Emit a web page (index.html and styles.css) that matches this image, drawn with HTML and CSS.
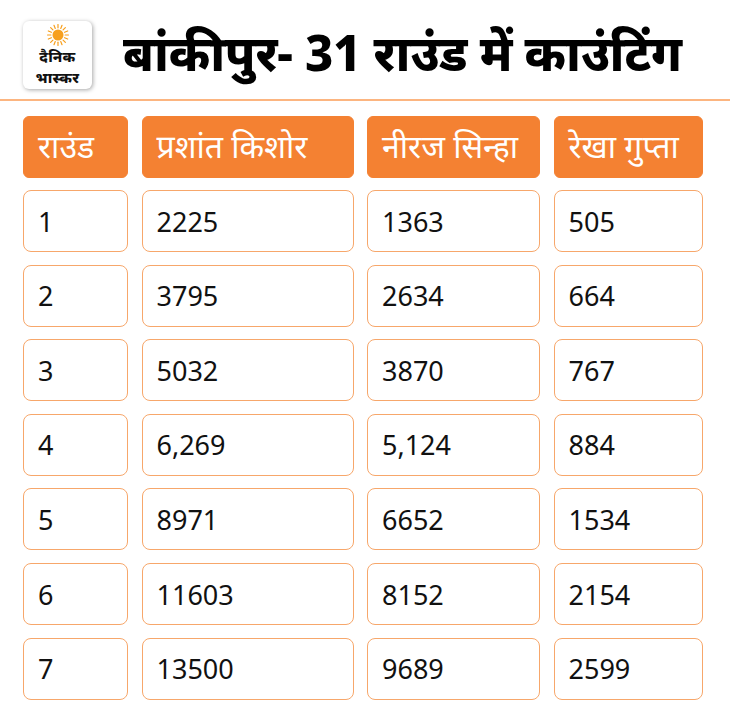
FILE: index.html
```html
<!DOCTYPE html>
<html lang="hi">
<head>
<meta charset="utf-8">
<link rel="stylesheet" href="styles.css">
</head>
<body>
<div class="page">
  <header class="top">
    <div class="logo">
      <svg class="sun" viewBox="0 0 40 40" width="22" height="22">
        <g stroke="#f7a01e" stroke-width="2.2" stroke-linecap="round">
          <line x1="20" y1="1" x2="20" y2="7"/><line x1="20" y1="33" x2="20" y2="39"/>
          <line x1="1" y1="20" x2="7" y2="20"/><line x1="33" y1="20" x2="39" y2="20"/>
          <line x1="6.6" y1="6.6" x2="10.8" y2="10.8"/><line x1="29.2" y1="29.2" x2="33.4" y2="33.4"/>
          <line x1="6.6" y1="33.4" x2="10.8" y2="29.2"/><line x1="29.2" y1="10.8" x2="33.4" y2="6.6"/>
          <line x1="12.7" y1="2.4" x2="15" y2="8"/><line x1="25" y1="32" x2="27.3" y2="37.6"/>
          <line x1="2.4" y1="12.7" x2="8" y2="15"/><line x1="32" y1="25" x2="37.6" y2="27.3"/>
          <line x1="27.3" y1="2.4" x2="25" y2="8"/><line x1="15" y1="32" x2="12.7" y2="37.6"/>
          <line x1="37.6" y1="12.7" x2="32" y2="15"/><line x1="8" y1="25" x2="2.4" y2="27.3"/>
        </g>
        <circle cx="20" cy="20" r="10" fill="#f7a01e"/>
      </svg>
      <span class="logo-text">दैनिक</span>
      <span class="logo-text">भास्कर</span>
    </div>
    <h1 class="title">बांकीपुर- 31 राउंड में काउंटिंग</h1>
  </header>
  <div class="rule"></div>
  <div class="grid">
    <div class="cell head">राउंड</div>
    <div class="cell head">प्रशांत किशोर</div>
    <div class="cell head">नीरज सिन्हा</div>
    <div class="cell head">रेखा गुप्ता</div>

    <div class="cell">1</div><div class="cell">2225</div><div class="cell">1363</div><div class="cell">505</div>
    <div class="cell">2</div><div class="cell">3795</div><div class="cell">2634</div><div class="cell">664</div>
    <div class="cell">3</div><div class="cell">5032</div><div class="cell">3870</div><div class="cell">767</div>
    <div class="cell">4</div><div class="cell">6,269</div><div class="cell">5,124</div><div class="cell">884</div>
    <div class="cell">5</div><div class="cell">8971</div><div class="cell">6652</div><div class="cell">1534</div>
    <div class="cell">6</div><div class="cell">11603</div><div class="cell">8152</div><div class="cell">2154</div>
    <div class="cell">7</div><div class="cell">13500</div><div class="cell">9689</div><div class="cell">2599</div>
  </div>
</div>
</body>
</html>
```

FILE: styles.css
```css
html, body {
  margin: 0;
  padding: 0;
  background: #ffffff;
}
body {
  font-family: "Noto Sans", "Open Sans", sans-serif;
  color: #111;
}
.page {
  width: 730px;
  height: 722px;
  overflow: hidden;
}
.top {
  height: 99px;
  display: flex;
  align-items: center;
  padding-left: 23px;
  box-sizing: border-box;
  padding-top: 11px;
}
.logo {
  width: 69px;
  height: 68px;
  border-radius: 6px;
  background: #fff;
  box-shadow: 1px 1px 4px rgba(0,0,0,0.35);
  display: flex;
  flex-direction: column;
  align-items: center;
  box-sizing: border-box;
  padding-top: 3px;
  flex: none;
  overflow: hidden;
}
.sun { display: block; flex: none; }
.logo-text {
  display: block;
  flex: none;
  font-weight: 800;
  font-size: 15px;
  line-height: 21px;
  height: 21px;
  color: #111;
  letter-spacing: 0.3px;
}
.title {
  margin: -6px 0 0 31px;
  font-size: 49px;
  font-weight: 800;
  color: #000;
  line-height: 1;
  white-space: nowrap;
  letter-spacing: -0.3px;
}
.rule {
  height: 2px;
  background: #fcb580;
}
.grid {
  display: grid;
  grid-template-columns: 105px 212px 173px 149px;
  column-gap: 13.5px;
  row-gap: 12.6px;
  grid-auto-rows: 62px;
  padding-left: 23px;
  padding-top: 14.5px;
}
.cell {
  border: 1px solid #f7a76b;
  border-radius: 8px;
  display: flex;
  align-items: center;
  padding-left: 14px;
  box-sizing: border-box;
  font-size: 27px;
  color: #111;
}
.head {
  background: #f48132;
  border-color: #f48132;
  border-radius: 6px;
  color: #fff;
  font-size: 32px;
  padding-bottom: 2px;
}
```
